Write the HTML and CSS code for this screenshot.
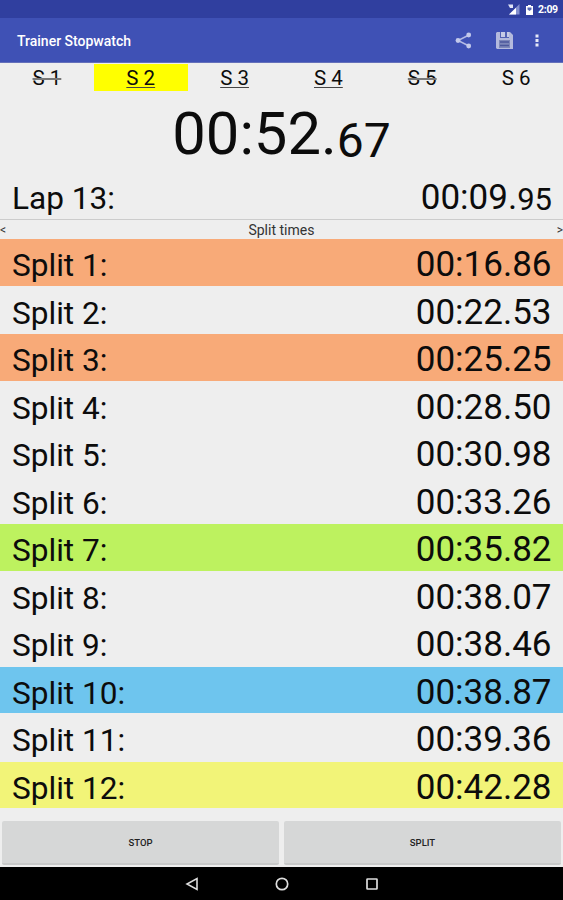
FILE: index.html
```html
<!DOCTYPE html>
<html lang="en">
<head>
    <meta charset="UTF-8">
    <meta name="viewport" content="width=device-width, initial-scale=1.0">
    <title>Trainer Stopwatch</title>
    <link rel="stylesheet" href="styles.css">
</head>
<body>
    <div class="status-bar">
        <svg class="signal-icon" width="12" height="11" viewBox="0 0 12 11">
            <path d="M11.5 0v10.5H1z" fill="#8490cf"/>
            <path d="M8 3.8v6.7H1z" fill="#fff"/>
            <path d="M0 .5h5v3.5H2z" fill="#dfe3f6"/>
        </svg>
        <svg class="battery-icon" width="7" height="10" viewBox="0 0 7 10">
            <path d="M2 0h3v1h2v9H0V1h2z" fill="#fff"/>
            <path d="M1.5 2.5h4v2l-2 1.5-2-1.5z" fill="#5969b6"/>
        </svg>
        <span class="clock">2:09</span>
    </div>
    <header class="app-bar">
        <h1>Trainer Stopwatch</h1>
        <svg class="share-icon" width="17" height="17" viewBox="0 0 17 17">
            <path d="M14 3L3 8.5 14 14" fill="none" stroke="#b4bbe4" stroke-width="1.5"/>
            <circle cx="13.7" cy="3" r="2.4" fill="#c3c9eb"/>
            <circle cx="3" cy="8.5" r="2.4" fill="#c3c9eb"/>
            <circle cx="13.7" cy="14" r="2.4" fill="#c3c9eb"/>
        </svg>
        <svg class="save-icon" width="17" height="17" viewBox="0 0 17 17">
            <path d="M1 0h13l3 3v14H1L0 16V1z" fill="#b4badd"/>
            <path d="M4 0h9v6H4z" fill="#5362b4"/>
            <path d="M5 0h4v5H5zM11 0h2v5h-2z" fill="#c6cbe6"/>
            <path d="M3 8h11v8H3z" fill="#7d87b9"/>
            <path d="M4 10h9M4 13.5h9" stroke="#4c589c" stroke-width="1.3"/>
        </svg>
        <svg class="menu-icon" width="4" height="13" viewBox="0 0 4 13">
            <path d="M.5 .5h3v3h-3zM.5 5h3v3h-3zM.5 9.5h3v3h-3z" fill="#e6e9f7"/>
        </svg>
    </header>
    <nav class="tabs">
        <div class="tab"><span class="stopped">S 1</span></div>
        <div class="tab active"><span class="running">S 2</span></div>
        <div class="tab"><span class="running">S 3</span></div>
        <div class="tab"><span class="running">S 4</span></div>
        <div class="tab"><span class="stopped">S 5</span></div>
        <div class="tab"><span>S 6</span></div>
    </nav>
    <div class="total-time">00:52.<span class="hundredths">67</span></div>
    <div class="lap">
        <span class="label">Lap 13:</span>
        <span class="time">00:09.<span class="hundredths">95</span></span>
    </div>
    <div class="list-header">
        <span>&lt;</span>
        <span class="list-title">Split times</span>
        <span>&gt;</span>
    </div>
    <main class="splits">
        <div class="split orange"><span class="label">Split 1:</span><span class="time">00:16.86</span></div>
        <div class="split"><span class="label">Split 2:</span><span class="time">00:22.53</span></div>
        <div class="split orange"><span class="label">Split 3:</span><span class="time">00:25.25</span></div>
        <div class="split"><span class="label">Split 4:</span><span class="time">00:28.50</span></div>
        <div class="split"><span class="label">Split 5:</span><span class="time">00:30.98</span></div>
        <div class="split"><span class="label">Split 6:</span><span class="time">00:33.26</span></div>
        <div class="split green"><span class="label">Split 7:</span><span class="time">00:35.82</span></div>
        <div class="split"><span class="label">Split 8:</span><span class="time">00:38.07</span></div>
        <div class="split"><span class="label">Split 9:</span><span class="time">00:38.46</span></div>
        <div class="split blue"><span class="label">Split 10:</span><span class="time">00:38.87</span></div>
        <div class="split"><span class="label">Split 11:</span><span class="time">00:39.36</span></div>
        <div class="split yellow"><span class="label">Split 12:</span><span class="time">00:42.28</span></div>
    </main>
    <div class="buttons">
        <button>STOP</button>
        <button>SPLIT</button>
    </div>
    <footer class="nav-bar">
        <svg width="14" height="14" viewBox="0 0 14 14">
            <path d="M12 1.5v11L2 7z" fill="none" stroke="#ddd" stroke-width="1.6"/>
        </svg>
        <svg width="14" height="14" viewBox="0 0 14 14">
            <circle cx="7" cy="7" r="5.7" fill="none" stroke="#ddd" stroke-width="1.7"/>
        </svg>
        <svg width="14" height="14" viewBox="0 0 14 14">
            <rect x="2" y="2" width="10" height="10" rx=".5" fill="none" stroke="#ddd" stroke-width="1.7"/>
        </svg>
    </footer>
</body>
</html>
```
FILE: styles.css
```css
* {
    box-sizing: border-box;
}

body {
    margin: 0;
    height: 900px;
    display: flex;
    flex-direction: column;
    overflow: hidden;
    background-color: #eee;
    color: #0c0c0c;
    font-family: Roboto, sans-serif;
}

svg {
    display: block;
    flex: none;
}

.status-bar {
    height: 18px;
    padding: 1px 5px 0 0;
    display: flex;
    align-items: center;
    justify-content: flex-end;
    background-color: #303f9f;
    color: #fff;
}

.battery-icon {
    margin: 0 5px 0 6px;
}

.clock {
    font-size: 10.5px;
    font-weight: 700;
    line-height: 16px;
    width: 20px;
    letter-spacing: -0.3px;
}

.app-bar {
    height: 45px;
    padding: 0 24px 0 17px;
    display: flex;
    align-items: center;
    background-color: #3f51b5;
    border-bottom: 1px solid #6470ba;
    color: #fff;
}

.app-bar h1 {
    flex: 1;
    margin: 0;
    padding-top: 2px;
    font-size: 14px;
    font-weight: 500;
}

.save-icon {
    margin: 0 22px 0 24px;
}

.tabs {
    height: 29px;
    padding: 1px 0;
    display: flex;
}

.tab {
    flex: 1;
    text-align: center;
    font-size: 20.5px;
    line-height: 29px;
}

.active {
    background-color: #ff0;
}

.running {
    text-decoration: underline;
    text-decoration-color: #444;
    text-decoration-thickness: 1px;
    text-underline-offset: 2px;
    text-decoration-skip-ink: none;
}

.stopped {
    text-decoration: line-through;
    text-decoration-color: #777;
    text-decoration-thickness: 1.5px;
}

.total-time {
    height: 84px;
    text-align: center;
    font-size: 59.7px;
    line-height: 84px;
    white-space: nowrap;
}

.total-time .hundredths {
    font-size: 48px;
    line-height: 1;
    vertical-align: -3px;
}

.lap {
    height: 43px;
    padding: 0 11px 0 12px;
    display: flex;
    justify-content: space-between;
}

.label {
    font-size: 31.6px;
    line-height: 46px;
}

.time {
    font-size: 35px;
    line-height: 44px;
}

.lap .hundredths {
    font-size: 31px;
    line-height: 1;
    vertical-align: -1px;
}

.list-header {
    height: 20px;
    border-top: 1px solid #ccc;
    display: flex;
    justify-content: space-between;
    font-size: 12px;
    line-height: 21px;
    color: #333;
}

.list-title {
    font-size: 14px;
}

.splits {
    height: 569px;
    display: flex;
    flex-direction: column;
    gap: 1px;
}

.split {
    flex: 1;
    min-height: 0;
    padding: 4px 11.5px 0 12px;
    display: flex;
    justify-content: space-between;
}

.orange {
    background-color: #f8aa78;
}

.green {
    background-color: #bdf25f;
}

.blue {
    background-color: #6ec5ee;
}

.yellow {
    background-color: #f2f478;
}

.buttons {
    flex: 1;
    padding: 13px 2px 2px;
    display: flex;
    gap: 5px;
}

.buttons button {
    flex: 1;
    border: none;
    border-bottom: 2px solid #c8c9c9;
    border-radius: 2px;
    background-color: #d6d7d7;
    color: #222;
    font-family: Roboto, sans-serif;
    font-size: 9.5px;
    font-weight: 500;
}

.nav-bar {
    height: 33px;
    display: flex;
    justify-content: center;
    align-items: center;
    gap: 76px;
    background-color: #000;
}
```
